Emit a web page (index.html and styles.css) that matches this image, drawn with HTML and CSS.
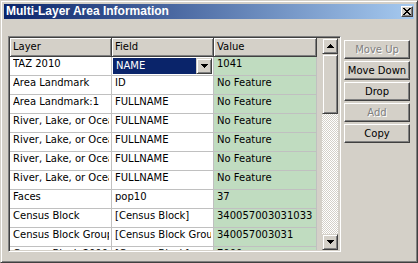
FILE: index.html
```html
<!DOCTYPE html>
<html lang="en">
<head>
  <meta charset="UTF-8" />
  <title>Multi-Layer Area Information</title>
  <link rel="stylesheet" href="styles.css">
</head>
<body>
  <div class="window">
    <div class="titlebar">
      <span class="title">Multi-Layer Area Information</span>
      <span class="close">
        <svg width="8" height="7" viewBox="0 0 8 7" shape-rendering="crispEdges">
          <path d="M0 0h2v1h1v1h2V1h1V0h2v1H7v1H6v1H5v1h1v1h1v1h1v1H6V6H5V5H3v1H2v1H0V6h1V5h1V4h1V3H2V2H1V1H0z" fill="#000"/>
        </svg>
      </span>
    </div>

    <div class="content">
      <div class="gridbox">
        <div class="table">
          <div class="hcell">Layer</div>
          <div class="hcell">Field</div>
          <div class="hcell">Value</div>

          <div class="cell"><span class="txt">TAZ 2010</span></div>
          <div class="cell combo">
            <span class="combo-text">NAME</span>
            <span class="combo-btn">
              <svg width="7" height="4" viewBox="0 0 7 4" shape-rendering="crispEdges"><path d="M0 0h7v1H6v1H5v1H4v1H3V3H2V2H1V1H0z"/></svg>
            </span>
          </div>
          <div class="cell val"><span class="txt">1041</span></div>

          <div class="cell"><span class="txt">Area Landmark</span></div>
          <div class="cell"><span class="txt">ID</span></div>
          <div class="cell val"><span class="txt">No Feature</span></div>

          <div class="cell"><span class="txt">Area Landmark:1</span></div>
          <div class="cell"><span class="txt">FULLNAME</span></div>
          <div class="cell val"><span class="txt">No Feature</span></div>

          <div class="cell"><span class="txt">River, Lake, or Ocean</span></div>
          <div class="cell"><span class="txt">FULLNAME</span></div>
          <div class="cell val"><span class="txt">No Feature</span></div>

          <div class="cell"><span class="txt">River, Lake, or Ocean</span></div>
          <div class="cell"><span class="txt">FULLNAME</span></div>
          <div class="cell val"><span class="txt">No Feature</span></div>

          <div class="cell"><span class="txt">River, Lake, or Ocean</span></div>
          <div class="cell"><span class="txt">FULLNAME</span></div>
          <div class="cell val"><span class="txt">No Feature</span></div>

          <div class="cell"><span class="txt">River, Lake, or Ocean</span></div>
          <div class="cell"><span class="txt">FULLNAME</span></div>
          <div class="cell val"><span class="txt">No Feature</span></div>

          <div class="cell"><span class="txt">Faces</span></div>
          <div class="cell"><span class="txt">pop10</span></div>
          <div class="cell val"><span class="txt">37</span></div>

          <div class="cell"><span class="txt">Census Block</span></div>
          <div class="cell"><span class="txt">[Census Block]</span></div>
          <div class="cell val"><span class="txt">340057003031033</span></div>

          <div class="cell"><span class="txt">Census Block Group</span></div>
          <div class="cell"><span class="txt">[Census Block Group]</span></div>
          <div class="cell val"><span class="txt">340057003031</span></div>

          <div class="cell"><span class="txt">Census Block 2000</span></div>
          <div class="cell"><span class="txt">[Census Block]</span></div>
          <div class="cell val"><span class="txt">7000</span></div>
        </div>

        <div class="scrollbar">
          <div class="sb-btn">
            <svg width="7" height="4" viewBox="0 0 7 4" shape-rendering="crispEdges"><path d="M3 0h1v1h1v1h1v1h1v1H0V3h1V2h1V1h1z"/></svg>
          </div>
          <div class="sb-thumb"></div>
          <div class="sb-track"></div>
          <div class="sb-btn">
            <svg width="7" height="4" viewBox="0 0 7 4" shape-rendering="crispEdges"><path d="M0 0h7v1H6v1H5v1H4v1H3V3H2V2H1V1H0z"/></svg>
          </div>
        </div>
      </div>

      <div class="buttons">
        <div class="btn disabled">Move Up</div>
        <div class="btn">Move Down</div>
        <div class="btn">Drop</div>
        <div class="btn disabled">Add</div>
        <div class="btn">Copy</div>
      </div>
    </div>
  </div>
</body>
</html>
```

FILE: styles.css
```css
* {
  box-sizing: border-box;
}
body {
  margin: 0;
  font-family: "DejaVu Sans", Verdana, sans-serif;
  font-size: 10px;
  color: #000;
}
.window {
  width: 418px;
  height: 263px;
  background: #d4d0c8;
  border: 1px solid;
  border-color: #d4d0c8 #404040 #404040 #d4d0c8;
  box-shadow: inset 1px 1px #fff, inset -1px -1px #808080;
  padding: 3px;
  overflow: hidden;
}
.titlebar {
  height: 15px;
  background: linear-gradient(to right, #0a246a, #a6caf0);
  display: flex;
  align-items: center;
  justify-content: space-between;
  padding: 0 1px 0 2px;
  color: #fff;
  font-family: "Liberation Sans", Arial, sans-serif;
  font-weight: bold;
  font-size: 12px;
  line-height: 15px;
}
.close {
  width: 12px;
  height: 11px;
  background: #d4d0c8;
  border: 1px solid;
  border-color: #fff #404040 #404040 #fff;
  box-shadow: inset -1px -1px #808080;
  display: flex;
  align-items: center;
  justify-content: center;
}
.content {
  display: flex;
  align-items: flex-start;
  padding: 17px 0 0 4px;
}
.gridbox {
  width: 333px;
  height: 216px;
  border: 1px solid;
  border-color: #808080 #fff #fff #808080;
  box-shadow: inset 1px 1px #404040, inset -1px -1px #d4d0c8;
  padding: 1px;
  display: flex;
  background: #d4d0c8;
}
.table {
  width: 307px;
  height: 212px;
  display: grid;
  grid-template-columns: 102px 102px 103px;
  grid-auto-rows: 19px;
  align-content: start;
  overflow: hidden;
}
.hcell {
  background: #d4d0c8;
  border-right: 1px solid #404040;
  border-bottom: 1px solid #404040;
  box-shadow: inset 1px 1px #fff, inset -1px -1px #808080;
  padding: 2px 3px 0 3px;
  line-height: 14px;
  white-space: nowrap;
}
.cell {
  background: #fff;
  border-right: 1px solid #c0c0c0;
  border-bottom: 1px solid #c0c0c0;
  padding: 0 2px 0 3px;
  line-height: 13px;
  white-space: nowrap;
}
.cell .txt {
  display: block;
  overflow: hidden;
}
.cell.val {
  background: #c0dcc0;
}
.cell.combo {
  display: flex;
  padding: 1px;
}
.combo-text {
  flex: 1;
  background: #0a246a;
  color: #fff;
  padding: 1px 0 0 3px;
  line-height: 13px;
}
.combo-btn {
  width: 16px;
  height: 16px;
  background: #d4d0c8;
  border: 1px solid;
  border-color: #d4d0c8 #404040 #404040 #d4d0c8;
  box-shadow: inset 1px 1px #fff, inset -1px -1px #808080;
  display: flex;
  align-items: center;
  justify-content: center;
}
.scrollbar {
  width: 16px;
  margin-left: 5px;
  display: flex;
  flex-direction: column;
}
.sb-btn,
.sb-thumb {
  background: #d4d0c8;
  border: 1px solid;
  border-color: #d4d0c8 #404040 #404040 #d4d0c8;
  box-shadow: inset 1px 1px #fff, inset -1px -1px #808080;
}
.sb-btn {
  height: 16px;
  display: flex;
  align-items: center;
  justify-content: center;
}
.sb-thumb {
  height: 60px;
}
.sb-track {
  flex: 1;
  background: conic-gradient(#fff 25%, #d4d0c8 0 50%, #fff 0 75%, #d4d0c8 0);
  background-size: 2px 2px;
}
.buttons {
  display: flex;
  flex-direction: column;
  gap: 2px;
  margin: 4px 0 0 3px;
}
.btn {
  width: 66px;
  height: 19px;
  padding-top: 2px;
  text-align: center;
  line-height: 13px;
  background: #d4d0c8;
  border: 1px solid;
  border-color: #fff #404040 #404040 #fff;
  box-shadow: inset -1px -1px #808080;
  cursor: default;
}
.btn.disabled {
  color: #808080;
  text-shadow: 1px 1px #fff;
}
```
